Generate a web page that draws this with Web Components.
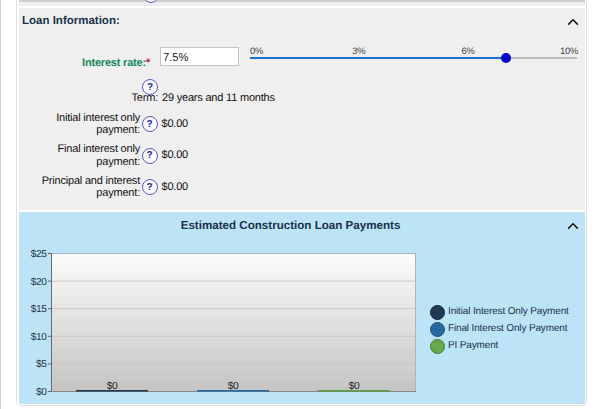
<!DOCTYPE html>
<html>
<head>
<meta charset="utf-8">
<title>Loan Information</title>
<style>
    html, body{ margin: 0; padding: 0; background: #fff; overflow: hidden; }
    body{ font-family: "Liberation Sans", Arial, sans-serif; text-rendering: geometricPrecision; }
</style>
</head>
<body>
<loan-page>
    <loan-panel slot="info" heading="Loan Information:" align="left">
        <rate-field label="Interest rate:" value="7.5%" position="78.4"></rate-field>
        <term-row>29 years and 11 months</term-row>
        <pay-row label="Initial interest only payment:">$0.00</pay-row>
        <pay-row label="Final interest only payment:">$0.00</pay-row>
        <pay-row label="Principal and interest payment:">$0.00</pay-row>
    </loan-panel>
    <loan-panel slot="chart" heading="Estimated Construction Loan Payments" align="center" tone="blue">
        <payment-chart></payment-chart>
    </loan-panel>
</loan-page>

<script>
// small shared icons
const CHEVRON = `<svg width="12" height="8" viewBox="0 0 12 8"><path d="M1.2 6.6 6 1.8l4.8 4.8" fill="none" stroke="#111" stroke-width="1.5"/></svg>`

class HelpIcon extends HTMLElement{
    constructor(){
        super()
        this.attachShadow({ mode: "open" })
        this.shadowRoot.innerHTML = `
        <style>
            :host{
                display: flex;
                align-items: center;
                justify-content: center;
                box-sizing: border-box;
                width: 16px;
                height: 16px;
                border: 1px solid #5a5ac8;
                border-radius: 50%;
                background: #f8f8ff;
                color: #2a2a9a;
                font: bold 10px "Liberation Sans", Arial, sans-serif;
                letter-spacing: 0;
            }
        </style>?`
    }
}

class LoanPage extends HTMLElement{
    constructor(){
        super()
        this.attachShadow({ mode: "open" })
        this.shadowRoot.innerHTML = `
        <style>
            :host{
                display: block;
                box-sizing: border-box;
                height: 409px;
                padding-left: 15px;
                border-left: 1px solid #d2d2d2;
                overflow: hidden;
            }
            .card{
                box-sizing: border-box;
                width: 571px;
                height: 406px;
                padding: 0 1px 1px 2px;
                border: 1px solid #e2e2e2;
                border-top: 0;
                border-radius: 0 0 5px 5px;
                display: flex;
                flex-direction: column;
            }
            .prev{
                height: 6px;
                background: #eee;
                border-top: 2px solid #cfcfcf;
                box-sizing: border-box;
                position: relative;
                margin-bottom: 2px;
            }
            .prev help-icon{
                position: absolute;
                left: 124px;
                top: -15px;
            }
        </style>
        <div class="card">
            <div class="prev"><help-icon></help-icon></div>
            <slot name="info"></slot>
            <slot name="chart"></slot>
        </div>`
    }
}

class LoanPanel extends HTMLElement{
    constructor(){
        super()
        this.attachShadow({ mode: "open" })
    }
    connectedCallback(){
        const heading = this.getAttribute('heading')
        this.shadowRoot.innerHTML = `
        <style>
            :host{
                display: block;
                background: #efefef;
                color: #111;
                font: 11px/12.5px "Liberation Sans", Arial, sans-serif;
                letter-spacing: -0.2px;
                padding-bottom: 10px;
            }
            :host([tone="blue"]){
                background: #bde3f7;
                margin-top: 2px;
                padding-bottom: 0;
                flex: 1;
            }
            header{
                display: flex;
                align-items: center;
                justify-content: space-between;
                height: 27px;
                padding: 0 6px 0 3px;
                color: #17324a;
                font-size: 11.5px;
                font-weight: bold;
                letter-spacing: 0;
            }
            :host([align="center"]) header{
                height: 29px;
                position: relative;
                justify-content: center;
                font-size: 11.6px;
                padding-right: 26px;
            }
            :host([align="center"]) svg{
                position: absolute;
                right: 6px;
                top: 10px;
            }
        </style>
        <header><span>${heading}</span>${CHEVRON}</header>
        <slot></slot>`
    }
}

class RateField extends HTMLElement{
    constructor(){
        super()
        this.attachShadow({ mode: "open" })
    }
    connectedCallback(){
        const pos = this.getAttribute('position')
        const ticks = [['0%', 2], ['3%', 33.3], ['6%', 66.7], ['10%', 97.6]]
        this.shadowRoot.innerHTML = `
        <style>
            :host{
                display: flex;
                align-items: flex-start;
                margin-top: 12px;
                height: 31px;
            }
            .label{
                box-sizing: border-box;
                width: 131px;
                padding-top: 10px;
                text-align: right;
                color: #14875a;
                font-weight: bold;
            }
            .label i{ color: #c0203a; font-style: normal; }
            input{
                box-sizing: border-box;
                width: 79px;
                height: 19px;
                margin: 0 0 0 10px;
                padding: 0 2px;
                border: 1px solid #c4c4c4;
                background: #fff;
                color: #222;
                font: 11.2px "Liberation Sans", Arial, sans-serif;
            }
            .slider{
                position: relative;
                width: 327px;
                height: 20px;
                margin-left: 11px;
            }
            .tick{
                position: absolute;
                top: -2px;
                transform: translateX(-50%);
                color: #444;
                font-size: 9.4px;
                line-height: 12px;
            }
            .track{
                position: absolute;
                left: 0; right: 0; top: 10px;
                height: 2px;
                background: #bbb;
            }
            .fill{
                height: 2px;
                background: #1a72d2;
                width: ${pos}%;
            }
            .thumb{
                position: absolute;
                top: 6px;
                left: ${pos}%;
                width: 10px;
                height: 10px;
                margin-left: -5px;
                border-radius: 50%;
                background: #0000c8;
            }
        </style>
        <div class="label">${this.getAttribute('label')}<i>*</i></div>
        <input value="${this.getAttribute('value')}">
        <div class="slider">
            ${ticks.map(([t, x]) => `<span class="tick" style="left:${x}%">${t}</span>`).join('')}
            <div class="track"><div class="fill"></div></div>
            <div class="thumb"></div>
        </div>`
    }
}

class TermRow extends HTMLElement{
    constructor(){
        super()
        this.attachShadow({ mode: "open" })
        this.shadowRoot.innerHTML = `
        <style>
            :host{
                display: grid;
                grid-template-columns: 139px auto;
                column-gap: 4px;
                height: 19px;
                margin-top: 8px;
                padding-top: 6px;
                box-sizing: border-box;
            }
            .label{
                position: relative;
                text-align: right;
            }
            help-icon{
                position: absolute;
                right: 0;
                top: -13px;
            }
        </style>
        <div class="label">Term:<help-icon></help-icon></div>
        <div><slot></slot></div>`
    }
}

class PayRow extends HTMLElement{
    constructor(){
        super()
        this.attachShadow({ mode: "open" })
    }
    connectedCallback(){
        this.shadowRoot.innerHTML = `
        <style>
            :host{
                display: flex;
                align-items: center;
                margin-top: 6.5px;
                height: 25px;
            }
            .label{
                box-sizing: border-box;
                width: 121px;
                text-align: right;
            }
            help-icon{ margin: 0 4px 0 1.5px; }
        </style>
        <div class="label">${this.getAttribute('label')}</div>
        <help-icon></help-icon>
        <div><slot></slot></div>`
    }
}

class PaymentChart extends HTMLElement{
    constructor(){
        super()
        this.attachShadow({ mode: "open" })
    }
    connectedCallback(){
        const axis = ['$25', '$20', '$15', '$10', '$5', '$0']
        const step = 27.6
        const top = 12.5
        const lines = axis.map((t, i) => {
            const y = top + i * step
            return `<text x="27.5" y="${y + 3.4}" text-anchor="end" class="axis">${t}</text>
                <line x1="29" x2="32" y1="${y}" y2="${y}" stroke="#666"/>
                ${i > 0 && i < 5 ? `<line x1="33" x2="396" y1="${y}" y2="${y}" stroke="#c8c8c8"/>` : ''}`
        }).join('')
        const bars = [[57, '#1f3a52'], [178, '#26699f'], [299, '#5c9c45']].map(([x, c]) =>
            `<rect x="${x}" y="149" width="72" height="1.6" fill="${c}"/>
            <text x="${x + 36}" y="147.5" text-anchor="middle" class="val">$0</text>`).join('')
        this.shadowRoot.innerHTML = `
        <style>
            :host{
                display: flex;
                align-items: flex-start;
            }
            svg{ display: block; flex: none; }
            text{ font-family: "Liberation Sans", Arial, sans-serif; }
            .axis{ font-size: 10.2px; letter-spacing: -0.4px; fill: #1d3346; }
            .val{ font-size: 10.2px; letter-spacing: -0.3px; fill: #222; }
            ul{
                list-style: none;
                margin: 64px 0 0 10.5px;
                padding: 0;
                display: flex;
                flex-direction: column;
                gap: 2px;
                font-size: 10px;
                letter-spacing: -0.15px;
                line-height: 14.7px;
                color: #17324a;
            }
            li{ display: flex; align-items: center; gap: 3.5px; }
            li b{
                box-sizing: border-box;
                width: 15px;
                height: 15px;
                border-radius: 50%;
                border: 1.5px solid;
            }
        </style>
        <svg width="400" height="156" viewBox="0 0 400 156">
            <defs>
                <linearGradient id="plot" x1="0" y1="0" x2="0" y2="1">
                    <stop offset="0" stop-color="#fcfcfc"/>
                    <stop offset="1" stop-color="#c4c4c4"/>
                </linearGradient>
            </defs>
            <rect x="32.5" y="12.5" width="364" height="138" fill="url(#plot)" stroke="#aab6bd"/>
            ${lines}
            <line x1="32.5" x2="32.5" y1="12" y2="150.5" stroke="#667"/>
            <line x1="32" x2="397" y1="150.5" y2="150.5" stroke="#888"/>
            ${bars}
        </svg>
        <ul>
            <li><b style="background:#1f3a52;border-color:#12263a"></b>Initial Interest Only Payment</li>
            <li><b style="background:#26699f;border-color:#1c4f78"></b>Final Interest Only Payment</li>
            <li><b style="background:#68a84c;border-color:#3f7d32"></b>PI Payment</li>
        </ul>`
    }
}

customElements.define('help-icon', HelpIcon)
customElements.define('loan-page', LoanPage)
customElements.define('loan-panel', LoanPanel)
customElements.define('rate-field', RateField)
customElements.define('term-row', TermRow)
customElements.define('pay-row', PayRow)
customElements.define('payment-chart', PaymentChart)
</script>
</body>
</html>
